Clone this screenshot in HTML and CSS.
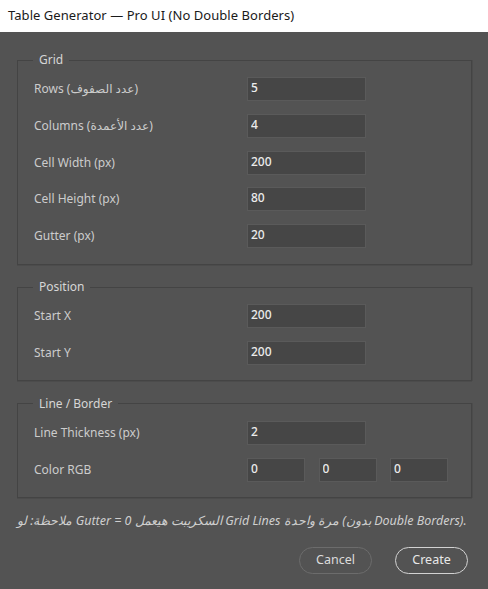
FILE: index.html
```html
<!DOCTYPE html>
<html lang="en">
<head>
<meta charset="utf-8">
<title>Table Generator — Pro UI (No Double Borders)</title>
<link rel="stylesheet" href="styles.css">
</head>
<body>
<div class="titlebar">Table Generator — Pro UI (No Double Borders)</div>
<main class="dialog">
  <fieldset class="group">
    <legend>Grid</legend>
    <div class="row"><label>Rows (عدد الصفوف)</label><input class="field" value="5"></div>
    <div class="row"><label>Columns (عدد الأعمدة)</label><input class="field" value="4"></div>
    <div class="row"><label>Cell Width (px)</label><input class="field" value="200"></div>
    <div class="row"><label>Cell Height (px)</label><input class="field" value="80"></div>
    <div class="row"><label>Gutter (px)</label><input class="field" value="20"></div>
  </fieldset>
  <fieldset class="group">
    <legend>Position</legend>
    <div class="row"><label>Start X</label><input class="field" value="200"></div>
    <div class="row"><label>Start Y</label><input class="field" value="200"></div>
  </fieldset>
  <fieldset class="group">
    <legend>Line / Border</legend>
    <div class="row"><label>Line Thickness (px)</label><input class="field" value="2"></div>
    <div class="row"><label>Color RGB</label>
      <div class="rgb"><input class="field small" value="0"><input class="field small" value="0"><input class="field small" value="0"></div>
    </div>
  </fieldset>
  <p class="note" dir="ltr">ملاحظة: لو Gutter = 0 السكريبت هيعمل Grid Lines مرة واحدة (بدون Double Borders).</p>
  <div class="actions">
    <button class="btn cancel">Cancel</button>
    <button class="btn create">Create</button>
  </div>
</main>
</body>
</html>
```
FILE: styles.css
```css
html, body {
  margin: 0;
  padding: 0;
}
body {
  width: 488px;
  height: 589px;
  background: #535353;
  font-family: "Noto Sans", "DejaVu Sans", sans-serif;
  overflow: hidden;
}
.titlebar {
  height: 32px;
  background: #ffffff;
  color: #1a1a1a;
  font-size: 13px;
  line-height: 31px;
  padding-left: 8px;
  letter-spacing: 0.05px;
}
.dialog {
  padding: 20px 16px 0 17px;
}
.group {
  margin: 0 0 14.5px 0;
  padding: 9px 16px 15.5px 16px;
  border: 1px solid #444444;
  box-shadow: 0 1px 0 #4c4c4c, 1px 0 0 #4c4c4c;
  min-width: 0;
}
.group legend {
  margin-left: -1px;
  padding: 0 6px;
  font-size: 12px;
  line-height: 16px;
  color: #d6d6d6;
}
.row {
  display: grid;
  grid-template-columns: 213px auto;
  align-items: center;
  height: 24px;
}
.row + .row {
  margin-top: 12.75px;
}
.row label {
  font-size: 12px;
  color: #cccccc;
  white-space: nowrap;
  line-height: 16px;
}
.field {
  box-sizing: border-box;
  width: 119px;
  height: 24px;
  margin: 0;
  padding: 0 3px 3px 3px;
  background: #464646;
  border: 1px solid #5a5a5a;
  color: #ececec;
  font-family: "Noto Sans", "DejaVu Sans", sans-serif;
  font-size: 12px;
  font-weight: 500;
  outline: none;
}
.rgb {
  display: flex;
  gap: 13.5px;
}
.field.small {
  width: 58px;
}
.note {
  margin: 14px 0 0 0;
  font-size: 12.5px;
  line-height: 16px;
  font-style: italic;
  color: #cfcfcf;
  white-space: nowrap;
}
.actions {
  display: flex;
  justify-content: flex-end;
  gap: 23px;
  margin-top: 18px;
  padding-right: 4px;
}
.btn {
  box-sizing: border-box;
  width: 73px;
  height: 27px;
  border-radius: 14px;
  background: transparent;
  font-family: "Noto Sans", "DejaVu Sans", sans-serif;
  font-size: 12.5px;
  color: #dcdcdc;
  padding: 0 0 2px 0;
}
.btn.cancel {
  border: 1px solid #6c6c6c;
}
.btn.create {
  border: 1.5px solid #d2d2d2;
  color: #e8e8e8;
}
```
